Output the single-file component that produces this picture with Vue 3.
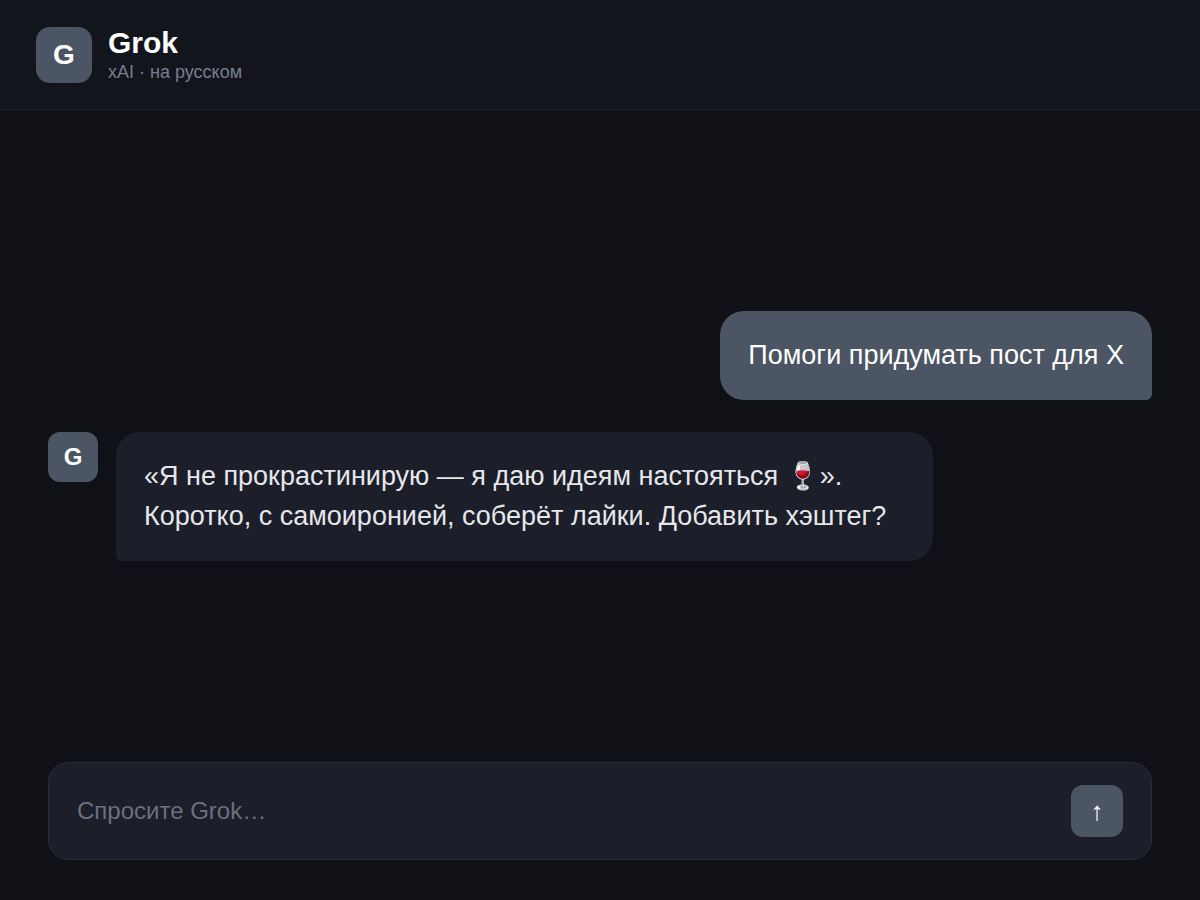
<script setup>
import { ref } from 'vue'

const draft = ref('')
const messages = [
  { id: 1, from: 'user', text: 'Помоги придумать пост для X' },
  { id: 2, from: 'bot', text: '«Я не прокрастинирую — я даю идеям настояться 🍷». Коротко, с самоиронией, соберёт лайки. Добавить хэштег?' },
]
</script>

<template>
  <div class="app">
    <header class="header">
      <div class="logo">G</div>
      <div class="titles">
        <h1>Grok</h1>
        <p>xAI · на русском</p>
      </div>
    </header>
    <main class="chat">
      <div v-for="m in messages" :key="m.id" class="row" :class="m.from">
        <div v-if="m.from === 'bot'" class="avatar">G</div>
        <div class="bubble">{{ m.text }}</div>
      </div>
    </main>
    <form class="composer" @submit.prevent>
      <input v-model="draft" type="text" placeholder="Спросите Grok…" aria-label="Спросите Grok" />
      <button type="submit" aria-label="Отправить">↑</button>
    </form>
  </div>
</template>

<style>
body {
  margin: 0;
  background: #101116;
}
</style>

<style scoped>
.app {
  box-sizing: border-box;
  display: flex;
  flex-direction: column;
  min-height: 100vh;
  padding-bottom: 40px;
  background: #101116;
  color: #e5e7eb;
  font-family: "Liberation Sans", Arial, sans-serif;
}
.header {
  display: flex;
  align-items: center;
  gap: 16px;
  padding: 26px 36px;
  background: #12151c;
  border-bottom: 1px solid #1e212b;
}
.logo,
.avatar {
  display: flex;
  flex-shrink: 0;
  align-items: center;
  justify-content: center;
  background: #4b5563;
  color: #fff;
  font-weight: 700;
}
.logo {
  width: 56px;
  height: 56px;
  border-radius: 14px;
  font-size: 28px;
}
h1 {
  margin: 0;
  color: #fff;
  font-size: 30px;
  line-height: 34px;
}
p {
  margin: 2px 0 0;
  color: #7a7d90;
  font-size: 18px;
  line-height: 21px;
}
.chat {
  display: flex;
  flex: 1;
  flex-direction: column;
  justify-content: center;
  gap: 32px;
  padding: 0 48px;
}
.row {
  display: flex;
  gap: 18px;
}
.user {
  justify-content: flex-end;
}
.avatar {
  width: 50px;
  height: 50px;
  border-radius: 12px;
  font-size: 24px;
}
.bubble {
  box-sizing: border-box;
  max-width: 74%;
  padding: 24px 28px;
  border-radius: 24px 24px 24px 6px;
  background: #1c1e29;
  font-size: 27px;
  line-height: 1.5;
}
.user .bubble {
  border-radius: 24px 24px 6px 24px;
  background: #4b5563;
  color: #fff;
}
.composer {
  display: flex;
  align-items: center;
  gap: 16px;
  margin: 0 48px;
  padding: 22px 28px;
  border: 1px solid #2a2c38;
  border-radius: 20px;
  background: #1c1e29;
}
input {
  flex: 1;
  min-width: 0;
  padding: 0;
  border: 0;
  outline: 0;
  background: transparent;
  color: #e5e7eb;
  font: 24px "Liberation Sans", Arial, sans-serif;
}
input::placeholder {
  color: #6b7080;
  opacity: 1;
}
button {
  width: 52px;
  height: 52px;
  padding: 0;
  border: 0;
  border-radius: 12px;
  background: #4b5563;
  color: #fff;
  font: 26px "Liberation Sans", Arial, sans-serif;
}
</style>
